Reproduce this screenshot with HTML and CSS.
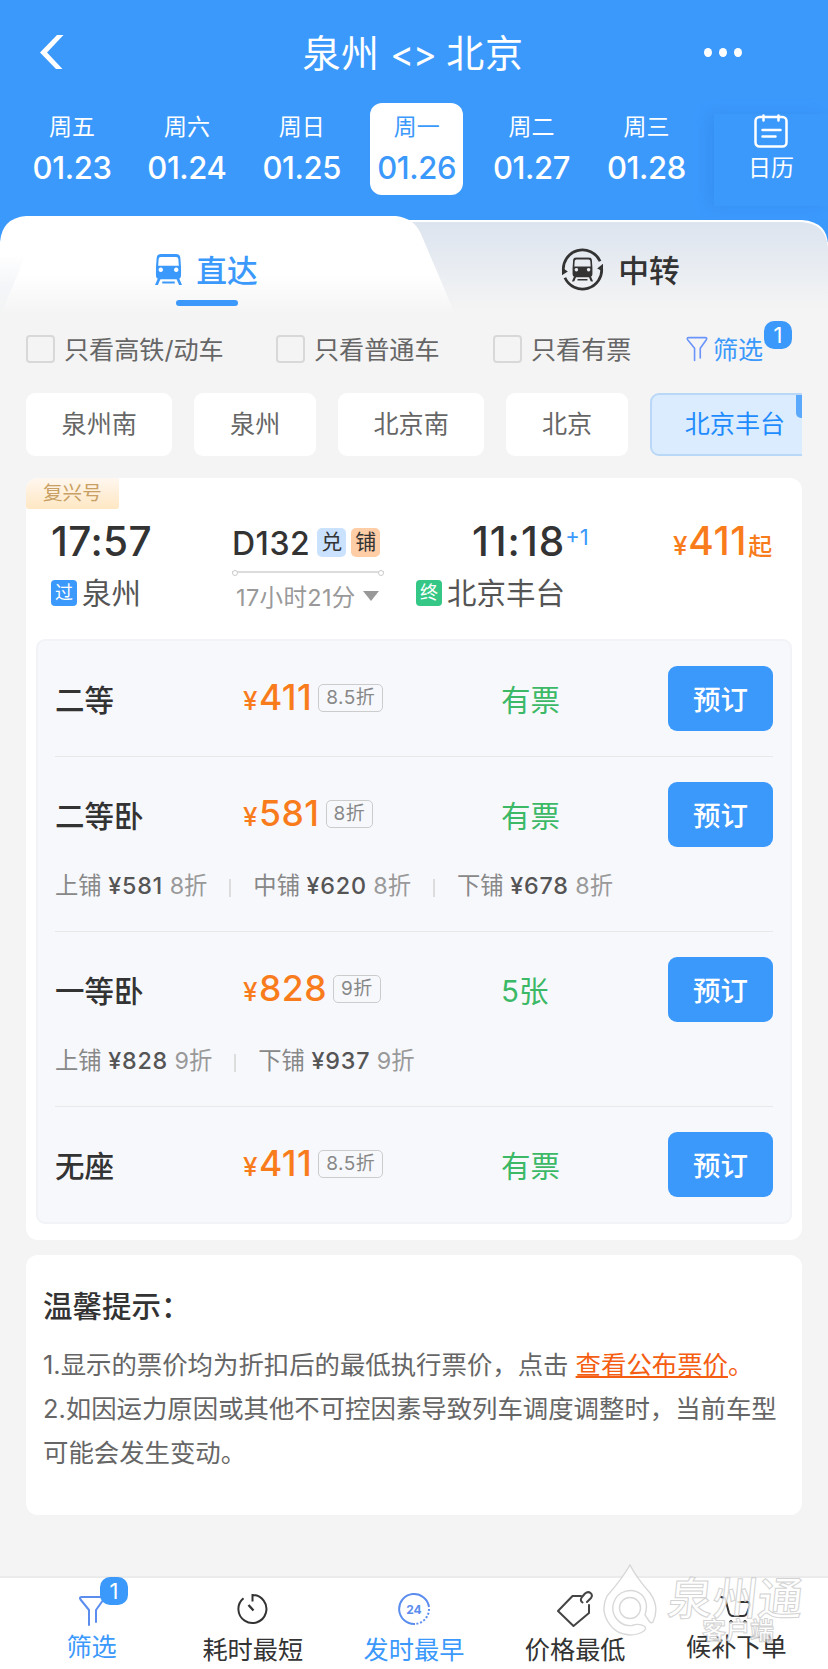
FILE: index.html
```html
<!DOCTYPE html>
<html lang="zh">
<head>
    <meta charset="UTF-8">
    <meta name="viewport" content="width=device-width, initial-scale=1.0">
    <title>泉州 - 北京 车票查询</title>
    <link rel="stylesheet" href="styles.css">
</head>
<body>
    <svg class="defs" width="0" height="0">
        <symbol id="train" viewBox="0 0 28 32">
            <path fill="currentColor" fill-rule="evenodd" d="M6 0h16q4 0 4.300 4L27 14v8q0 4-4 4H5q-4 0-4-4v-8L1.700 4Q2 0 6 0zM6 3q-2 0-2.200 2L3.300 12h21.400L24.200 5Q24 3 22 3zM6 14a2.300 2.300 0 1 0 .01 0zM22 14a2.300 2.300 0 1 0 .01 0z"/>
            <path fill="currentColor" d="M3 25h3l-3 7H0zM22 25h3l3 7H25zM7.500 28.500h13v2h-13z"/>
        </symbol>
        <symbol id="funnel" viewBox="0 0 26 32">
            <path fill="none" stroke="currentColor" stroke-width="2" stroke-linecap="round" stroke-linejoin="round" d="M10 30V15L1.500 4.500Q0 2 3 2h20q3 0 1.500 2.500L17 15v12"/>
        </symbol>
    </svg>

    <header class="header">
        <div class="title-bar">
            <svg class="back" viewBox="0 0 24 34"><path d="M17 0h6.500L7 17.500 22.500 34H16L0 17.500z" fill="#fff"/></svg>
            <h1>泉州 <span class="swap">&lt;&gt;</span> 北京</h1>
            <div class="more"><i></i><i></i><i></i></div>
        </div>
        <div class="dates">
            <div class="day"><span>周五</span><b>01.23</b></div>
            <div class="day"><span>周六</span><b>01.24</b></div>
            <div class="day"><span>周日</span><b>01.25</b></div>
            <div class="day active"><span>周一</span><b>01.26</b></div>
            <div class="day"><span>周二</span><b>01.27</b></div>
            <div class="day"><span>周三</span><b>01.28</b></div>
            <div class="calendar">
                <svg width="34" height="34" viewBox="0 0 34 34" fill="none" stroke="#fff" stroke-width="2.500" stroke-linecap="round">
                    <rect x="1.500" y="3" width="31" height="29.500" rx="4"/>
                    <path d="M9.500 1.500v5M24.500 1.500v5M8.500 16h18M8.500 22.500h13"/>
                </svg>
                <span>日历</span>
            </div>
        </div>
    </header>

    <div class="tabs">
        <svg class="tabs-bg" viewBox="0 0 828 98" preserveAspectRatio="none">
            <defs>
                <linearGradient id="g1" x1="0" y1="0" x2="0" y2="1"><stop offset=".6" stop-color="#fff"/><stop offset="1" stop-color="#f4f4f4"/></linearGradient>
                <linearGradient id="g2" x1="0" y1="0" x2="0" y2="1"><stop offset="0" stop-color="#dce4ef"/><stop offset=".95" stop-color="#f4f4f4"/></linearGradient>
                <linearGradient id="g3" x1="0" y1="0" x2="0" y2="1"><stop offset="0" stop-color="#f3f5f8" stop-opacity="0"/><stop offset=".6" stop-color="#f3f5f8"/><stop offset="1" stop-color="#f4f4f4"/></linearGradient>
            </defs>
            <path d="M380 4H802Q828 6 828 30V98H380z" fill="#fff"/>
            <path d="M380 6H801Q826 7 828 32V98H380z" fill="url(#g2)"/>
            <path d="M0 26Q2 2 26 0H396Q414 2 421 18L455 98H0z" fill="url(#g1)"/>
            <path d="M0 38H26L2 96V98H0z" fill="url(#g3)"/>
        </svg>
        <div class="tab tab-active">
            <svg class="icon-train"><use href="#train"/></svg>
            <span>直达</span>
        </div>
        <div class="tab">
            <svg class="icon-transfer" viewBox="0 0 44 44">
                <g fill="none" stroke="currentColor" stroke-width="2.800">
                    <path d="M2.500 24A19.700 19.700 0 0 1 40 13.500"/>
                    <path d="M41.500 20A19.700 19.700 0 0 1 4 30.500"/>
                </g>
                <path d="M1 28V20l6 4zM43 16v8l-6-3z" fill="currentColor"/>
                <svg x="11" y="9.500" width="22" height="25"><use href="#train"/></svg>
            </svg>
            <span>中转</span>
        </div>
    </div>

    <div class="filters">
        <label class="check c1"><i></i><span>只看高铁/动车</span></label>
        <label class="check c2"><i></i><span>只看普通车</span></label>
        <label class="check c3"><i></i><span>只看有票</span></label>
        <div class="filter-btn"><svg><use href="#funnel"/></svg><span>筛选</span><em class="badge">1</em></div>
    </div>

    <div class="stations">
        <span class="chip">泉州南</span>
        <span class="chip">泉州</span>
        <span class="chip">北京南</span>
        <span class="chip">北京</span>
        <span class="chip chip-active">北京丰台</span>
    </div>

    <div class="card train">
        <div class="train-tag">复兴号</div>
        <div class="train-info">
            <div class="depart">
                <div class="time">17:57</div>
                <div class="station"><i class="mark">过</i>泉州</div>
            </div>
            <div class="trip">
                <div class="train-no">D132 <i class="sq blue">兑</i><i class="sq orange">铺</i></div>
                <div class="line"></div>
                <div class="duration">17小时21分<i class="caret"></i></div>
            </div>
            <div class="arrive">
                <div class="time">11:18<sup>+1</sup></div>
                <div class="station"><i class="mark green">终</i>北京丰台</div>
            </div>
            <div class="from-price"><small>¥</small>411<em>起</em></div>
        </div>

        <div class="seats">
            <div class="seat">
                <div class="seat-row">
                    <div class="name">二等</div>
                    <div class="price"><small>¥</small>411<i>8.5折</i></div>
                    <div class="left">有票</div>
                    <button>预订</button>
                </div>
            </div>
            <div class="seat">
                <div class="seat-row">
                    <div class="name">二等卧</div>
                    <div class="price"><small>¥</small>581<i>8折</i></div>
                    <div class="left">有票</div>
                    <button>预订</button>
                </div>
                <div class="berths">
                    <span>上铺 <b>¥581</b> <em>8折</em></span>
                    <span>中铺 <b>¥620</b> <em>8折</em></span>
                    <span>下铺 <b>¥678</b> <em>8折</em></span>
                </div>
            </div>
            <div class="seat">
                <div class="seat-row">
                    <div class="name">一等卧</div>
                    <div class="price"><small>¥</small>828<i>9折</i></div>
                    <div class="left">5张</div>
                    <button>预订</button>
                </div>
                <div class="berths">
                    <span>上铺 <b>¥828</b> <em>9折</em></span>
                    <span>下铺 <b>¥937</b> <em>9折</em></span>
                </div>
            </div>
            <div class="seat">
                <div class="seat-row">
                    <div class="name">无座</div>
                    <div class="price"><small>¥</small>411<i>8.5折</i></div>
                    <div class="left">有票</div>
                    <button>预订</button>
                </div>
            </div>
        </div>
    </div>

    <div class="card tips">
        <h2>温馨提示：</h2>
        <p>1.显示的票价均为折扣后的最低执行票价，点击 <a>查看公布票价</a><span class="dot">。</span></p>
        <p>2.如因运力原因或其他不可控因素导致列车调度调整时，当前车型<br>可能会发生变动。</p>
    </div>

    <nav class="bottom-bar">
        <div class="item on filter-item">
            <svg width="26" height="31"><use href="#funnel"/></svg>
            <span>筛选</span>
            <em class="badge">1</em>
        </div>
        <div class="item">
            <svg width="32" height="32" viewBox="0 0 32 32" fill="none" stroke="#333" stroke-width="2">
                <path d="M6.500 5.200A14 14 0 1 0 15.500 2v6.500"/>
                <path d="M11.500 12l5 5.500" stroke-width="2.400"/>
            </svg>
            <span>耗时最短</span>
        </div>
        <div class="item on">
            <svg width="32" height="32" viewBox="0 0 32 32" fill="none" stroke="#5b8def" stroke-width="2">
                <path d="M31 14A15 15 0 1 0 17 31"/>
                <path d="M31 16A15 15 0 0 1 17 31" stroke-dasharray="2 1.800"/>
                <text x="16" y="20.500" class="h24">24</text>
            </svg>
            <span>发时最早</span>
        </div>
        <div class="item">
            <svg width="36" height="36" viewBox="0 0 36 36" fill="none" stroke="#444" stroke-width="2" stroke-linecap="round" stroke-linejoin="round">
                <path d="M24 5H15.500L1 20l15.500 15L32 22V14"/>
                <path d="M25.500 11.500q-3-2-.5-5.500l3-3.500q3-2.500 5.500-.5t.5 5l-4 4"/>
            </svg>
            <span>价格最低</span>
        </div>
        <div class="item cart">
            <svg width="34" height="30" viewBox="0 0 34 30" fill="none" stroke="#333" stroke-width="2" stroke-linecap="round" stroke-linejoin="round">
                <path d="M2 2l4 1 4 15q1 3 4 3h10q3 0 4-3l3-8q0-3-3-3h-9"/>
                <circle cx="12" cy="27" r="1.500" fill="#333" stroke-width="1"/>
                <circle cx="26" cy="27" r="1.500" fill="#333" stroke-width="1"/>
            </svg>
            <span>候补下单</span>
        </div>
        <div class="watermark">
            <svg width="56" height="72" viewBox="0 0 56 72" fill="#fff" stroke="#d2d2d2" stroke-width="1.400">
                <path d="M28 1Q34 13 48 29Q58 43 51 58Q49 60 47 57L43 51Q47 39 40 31A17.500 17.500 0 1 0 30 61.500Q37 59 42 62Q45 64 42 67Q36 71 28 71A27 27 0 0 1 5 32Q20 15 28 1z"/>
                <circle cx="28" cy="44" r="10.500"/>
            </svg>
            <div class="wm-name">泉州通</div>
            <div class="wm-sub">客户端</div>
        </div>
    </nav>
</body>
</html>
```
FILE: styles.css
```css
* {
    box-sizing: border-box;
}
body {
    margin: 0;
    width: 828px;
    height: 1669px;
    overflow: hidden;
    display: flex;
    flex-direction: column;
    background-color: #f4f4f4;
    font-family: Inter, "Noto Sans CJK SC", sans-serif;
    color: #333;
}
i, em {
    font-style: normal;
}
.defs {
    position: absolute;
}
.header {
    height: 242px;
    margin-bottom: -26px;
    background-color: #3c99fc;
    color: #fff;
}
.title-bar {
    height: 103px;
    padding: 0 86px 0 40px;
    display: flex;
    justify-content: space-between;
    align-items: center;
}
.back {
    width: 24px;
    height: 34px;
}
.title-bar h1 {
    margin: 0 0 3px 58px;
    font-size: 38px;
    font-weight: 400;
    letter-spacing: 0.7px;
    word-spacing: -1px;
}
.swap {
    font-size: 36px;
    letter-spacing: -1px;
}
.more {
    display: flex;
    gap: 7px;
    padding-top: 1px;
}
.more i {
    width: 8px;
    height: 9px;
    border-radius: 50%;
    background-color: #fff;
}
.dates {
    display: flex;
    padding-left: 14.6px;
}
.day {
    width: 93px;
    height: 92px;
    margin: 0 10.95px;
    flex: none;
    display: flex;
    flex-direction: column;
    align-items: center;
    padding-top: 9px;
    border-radius: 12px;
}
.day span, .calendar span {
    font-size: 23px;
    line-height: 30px;
}
.day b {
    font-size: 31px;
    line-height: 40px;
    margin-top: 6px;
    font-weight: 450;
    letter-spacing: -0.4px;
    white-space: nowrap;
}
.day.active {
    background-color: #fff;
    color: #3c99fc;
}
.calendar {
    flex: 1;
    height: 92px;
    margin-top: 11px;
    margin-left: 10px;
    display: flex;
    flex-direction: column;
    align-items: center;
    box-shadow: -6px 0 14px rgba(40, 120, 220, 0.25);
    background-color: #3c99fc;
}
.calendar span {
    margin-top: 5px;
}
.tabs {
    position: relative;
    display: flex;
    height: 98px;
    flex: none;
}
.tabs-bg {
    position: absolute;
    width: 828px;
    height: 98px;
}
.tab {
    position: relative;
    width: 414px;
    display: flex;
    align-items: center;
    justify-content: center;
    padding-top: 9px;
    padding-right: 1px;
    font-size: 30.8px;
    font-weight: 500;
}
.tab span {
    margin-top: -2px;
}
.tab-active {
    color: #3c99fc;
}
.tab-active::after {
    content: "";
    position: absolute;
    left: 176px;
    top: 84px;
    width: 62px;
    height: 6px;
    border-radius: 3px;
    background-color: #3c99fc;
}
.icon-train {
    width: 27px;
    height: 31px;
    margin-right: 14px;
}
.icon-transfer {
    width: 43px;
    height: 43px;
    margin-right: 14px;
}
.filters {
    display: flex;
    align-items: center;
    height: 70px;
    padding-left: 26px;
    font-size: 25.1px;
    color: #666;
    flex: none;
}
.filters span {
    margin-top: -2px;
}
.check {
    display: flex;
    align-items: center;
    white-space: nowrap;
}
.c1 {
    width: 250px;
}
.c2 {
    width: 217px;
}
.c3 {
    width: 193px;
}
.check i {
    width: 29px;
    height: 28px;
    margin-right: 9px;
    border: 2px solid #d8d8d8;
    border-radius: 4px;
}
.filter-btn {
    position: relative;
    display: flex;
    align-items: center;
    color: #3c99fc;
}
.filter-btn svg {
    width: 22px;
    height: 26px;
    color: #6b94fa;
    margin-right: 5px;
}
.badge {
    position: absolute;
    width: 28px;
    height: 28px;
    border-radius: 10px;
    background-color: #3c99fc;
    color: #fff;
    font-size: 22px;
    line-height: 28px;
    text-align: center;
}
.filter-btn .badge {
    left: 78px;
    top: -11px;
}
.stations {
    display: flex;
    gap: 22px;
    margin: 9px 26px 22px;
    overflow: hidden;
    flex: none;
}
.chip {
    flex: none;
    height: 63px;
    padding: 0 35.6px;
    line-height: 62px;
    font-size: 25.1px;
    color: #666;
    background-color: #fff;
    border-radius: 9px;
}
.chip-active {
    position: relative;
    color: #1e8bff;
    background-color: #dbecfe;
    border: 2px solid #b9d8f7;
    padding: 0 33px;
    line-height: 58px;
}
.chip-active::after {
    content: "";
    position: absolute;
    right: -2px;
    top: 0;
    width: 24px;
    height: 23px;
    border-radius: 0 0 0 5px;
    background-color: #5aa9fc;
}
.card {
    margin: 0 26px;
    background-color: #fff;
    border-radius: 12px;
    flex: none;
}
.train {
    height: 762px;
    padding: 0 10px;
}
.train-tag {
    width: 93px;
    height: 31px;
    margin-left: -10px;
    padding-left: 17px;
    font-size: 19.6px;
    line-height: 30px;
    color: #c8a063;
    background: linear-gradient(#fff7ef, #ffe7c3);
    border-radius: 12px 0 3px 3px;
}
.train-info {
    height: 130px;
    padding-left: 15px;
    padding-top: 10px;
    display: flex;
}
.depart {
    width: 181px;
}
.trip {
    width: 152px;
    margin-right: 32px;
}
.arrive {
    width: 257px;
}
.time {
    height: 46px;
    font-size: 40.5px;
    line-height: 45px;
    font-weight: 500;
    letter-spacing: 0.4px;
    white-space: nowrap;
}
.arrive .time {
    padding-left: 56px;
    letter-spacing: 1px;
}
.time sup {
    font-size: 22px;
    line-height: 20px;
    color: #3c99fc;
    font-weight: 400;
    vertical-align: 11px;
    letter-spacing: 0;
}
.station {
    display: flex;
    align-items: center;
    margin-top: 6px;
    height: 40px;
    font-size: 29.5px;
    color: #555;
    white-space: nowrap;
}
.mark {
    width: 26px;
    height: 26px;
    margin-right: 5px;
    margin-top: 3px;
    border-radius: 4px;
    background-color: #3c99fc;
    color: #fff;
    font-size: 18px;
    line-height: 25px;
    text-align: center;
}
.mark.green {
    background-color: #34c785;
}
.train-no {
    display: flex;
    align-items: center;
    height: 49px;
    font-size: 32px;
    font-weight: 500;
    letter-spacing: 0.5px;
}
.sq {
    width: 29px;
    height: 29px;
    margin-left: 5px;
    margin-top: -2px;
    border-radius: 5px;
    font-size: 21px;
    line-height: 27px;
    text-align: center;
    font-weight: 400;
    letter-spacing: 0;
}
.sq.blue {
    background-color: #cbe2fe;
    margin-left: 7px;
}
.sq.orange {
    background-color: #ffcda6;
}
.line {
    position: relative;
    height: 2px;
    margin-top: 3px;
    background-color: #dcdcdc;
}
.line::before, .line::after {
    content: "";
    position: absolute;
    top: -1px;
    left: 0;
    width: 4px;
    height: 4px;
    border: 1px solid #ccc;
    border-radius: 50%;
    background-color: #fff;
}
.line::after {
    left: auto;
    right: 0;
}
.duration {
    display: flex;
    align-items: center;
    height: 46px;
    padding-left: 4px;
    font-size: 23.5px;
    letter-spacing: 0.35px;
    color: #999;
    white-space: nowrap;
}
.caret {
    margin-left: 7px;
    border: 8px solid transparent;
    border-top: 10px solid #999;
    border-bottom: 0;
}
.from-price {
    flex: 1;
    height: 46px;
    line-height: 43px;
    font-size: 39px;
    font-weight: 500;
    color: #f97c1c;
    letter-spacing: 0.7px;
    white-space: nowrap;
}
.from-price small, .price small {
    font-size: 26px;
    margin-right: 1px;
}
.from-price small {
    margin-right: 0;
}
.from-price em {
    font-size: 24px;
    margin-left: 1px;
}
.seats {
    height: 585px;
    padding: 0 17px;
    border: 2px solid #f2f3f6;
    border-radius: 9px;
    background-color: #f7f8fc;
}
.seat {
    height: 175px;
    padding-top: 25px;
    border-bottom: 1px solid #e8e8e8;
}
.seat:first-child, .seat:last-child {
    height: 116px;
}
.seat:last-child {
    border-bottom: 0;
}
.seat-row {
    display: flex;
    align-items: center;
    height: 65px;
}
.name {
    width: 187px;
    margin-top: -2px;
    font-size: 29.5px;
    font-weight: 500;
}
.price {
    display: flex;
    align-items: baseline;
    width: 259px;
    margin-top: 2px;
    padding-left: 1px;
    font-size: 35.5px;
    font-weight: 500;
    color: #f97c1c;
    line-height: 44px;
    letter-spacing: 0.5px;
}
.price i {
    align-self: center;
    height: 28px;
    padding: 0 7px;
    margin-left: 6px;
    margin-top: -3px;
    border: 1px solid #ccc;
    border-radius: 5px;
    font-size: 19px;
    line-height: 25px;
    font-weight: 400;
    color: #888;
    letter-spacing: 0.4px;
}
.left {
    flex: 1;
    margin-top: -2px;
    font-size: 29.5px;
    color: #3cb966;
}
.seat button {
    width: 105px;
    height: 65px;
    padding: 0 0 2px;
    border: none;
    border-radius: 9px;
    background-color: #3c99fc;
    color: #fff;
    font-family: inherit;
    font-size: 27.500px;
    font-weight: 500;
    cursor: pointer;
}
.berths {
    display: flex;
    margin-top: 21px;
    font-size: 23.3px;
    line-height: 36px;
    color: #888;
    white-space: nowrap;
}
.berths span + span {
    position: relative;
    margin-left: 46px;
}
.berths span + span::before {
    content: "";
    position: absolute;
    left: -24px;
    top: 11px;
    width: 2px;
    height: 18px;
    background-color: #ddd;
}
.berths b {
    font-weight: 500;
    color: #555;
    letter-spacing: 0.8px;
}
.berths em {
    color: #999;
}
.tips {
    height: 260px;
    margin-top: 15px;
    padding: 29px 17px 0;
}
.tips h2 {
    margin: 0 0 15px;
    font-size: 29.5px;
    line-height: 44px;
    font-weight: 500;
}
.tips p {
    margin: 0;
    font-size: 25.4px;
    line-height: 44px;
    color: #666;
    white-space: nowrap;
}
.tips a, .tips .dot {
    color: #f45d12;
}
.tips a {
    text-decoration: underline;
}
.bottom-bar {
    position: relative;
    display: flex;
    height: 93px;
    padding: 0 11px;
    margin-top: auto;
    border-top: 2px solid #ebebeb;
    background-color: #fff;
    flex: none;
}
.item {
    position: relative;
    width: 161.2px;
    display: flex;
    flex-direction: column;
    align-items: center;
    font-size: 25.2px;
    color: #333;
}
.item svg {
    height: 36px;
    margin-top: 13px;
}
.item span {
    line-height: 36px;
    margin-top: 5px;
}
.item.on {
    color: #3c99fc;
}
.item.filter-item svg {
    color: #5b8def;
    margin-top: 15px;
}
.filter-item span, .cart span {
    margin-top: 0;
}
.item.cart svg {
    height: 30px;
    margin-top: 17px;
    margin-bottom: 4px;
}
.filter-item .badge {
    left: 89px;
    top: -1px;
}
.h24 {
    font-size: 12px;
    font-weight: 700;
    fill: #5b8def;
    stroke: none;
    text-anchor: middle;
}
/* logo stamp lying over the bottom bar */
.watermark {
    position: absolute;
    left: 602px;
    top: -14px;
    width: 210px;
    height: 90px;
    color: #fff;
    opacity: 0.85;
    white-space: nowrap;
}
.wm-name {
    position: absolute;
    left: 66px;
    top: 5px;
    font-size: 45px;
    line-height: 60px;
    font-weight: 500;
    transform: skewX(-6deg);
    -webkit-text-stroke: 1px #ccc;
}
.wm-sub {
    position: absolute;
    left: 100px;
    top: 53px;
    font-size: 24px;
    line-height: 28px;
    font-weight: 700;
    -webkit-text-stroke: 1px #ccc;
}
```
